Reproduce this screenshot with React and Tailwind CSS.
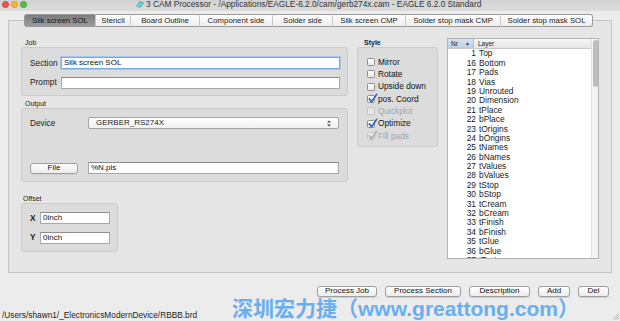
import React from "react";

const tabs = [
  { label: "Silk screen SOL", w: 71 },
  { label: "Stencil", w: 35 },
  { label: "Board Outline", w: 69 },
  { label: "Component side", w: 73 },
  { label: "Solder side", w: 60 },
  { label: "Silk screen CMP", w: 73 },
  { label: "Solder stop mask CMP", w: 95 },
  { label: "Solder stop mask SOL", w: 93 },
];

const layers = [
  [1, "Top"], [16, "Bottom"], [17, "Pads"], [18, "Vias"], [19, "Unrouted"],
  [20, "Dimension"], [21, "tPlace"], [22, "bPlace"], [23, "tOrigins"],
  [24, "bOrigins"], [25, "tNames"], [26, "bNames"], [27, "tValues"],
  [28, "bValues"], [29, "tStop"], [30, "bStop"], [31, "tCream"],
  [32, "bCream"], [33, "tFinish"], [34, "bFinish"], [35, "tGlue"],
  [36, "bGlue"], [37, "tTest"],
];

const styleOpts = [
  { label: "Mirror", checked: false },
  { label: "Rotate", checked: false },
  { label: "Upside down", checked: false },
  { label: "pos. Coord", checked: true },
  { label: "Quickplot", checked: false, disabled: true },
  { label: "Optimize", checked: true },
  { label: "Fill pads", checked: true, disabled: true },
];

const Check = ({ checked, disabled }) => (
  <div
    className={`relative w-[8px] h-[8px] rounded-[1.5px] border ${
      disabled ? "border-[#c4c4c4] bg-[#e6e6e6]" : "border-[#8e8e8e] bg-gradient-to-b from-white to-[#e8e8e8]"
    }`}
  >
    {checked && (
      <svg className="absolute -left-[1px] -top-[3px] w-[11px] h-[11px]" viewBox="0 0 12 12">
        <path
          d="M2.5 6.5 L5 9.5 L10.5 1.5"
          fill="none"
          stroke={disabled ? "#a9a9a9" : "#2d5fb4"}
          strokeWidth="1.8"
          strokeLinecap="round"
          strokeLinejoin="round"
        />
      </svg>
    )}
  </div>
);

const Field = ({ value, className = "", focus }) => (
  <div
    className={`h-[12px] bg-white flex items-center px-[2px] text-[8px] text-[#111] ${
      focus ? "border border-[#7aa7dc] shadow-[0_0_0_1px_#a9c8ee]" : "border border-[#a8a8a8] border-t-[#8c8c8c]"
    } ${className}`}
  >
    {value}
  </div>
);

const Btn = ({ label, w }) => (
  <div
    className="h-[11px] flex items-center justify-center rounded-[3px] border border-[#9e9e9e] bg-gradient-to-b from-white to-[#ececec] text-[8px] text-[#111] shadow-[0_1px_0_#d0d0d0]"
    style={{ width: w }}
  >
    {label}
  </div>
);

export default function App() {
  return (
    <div
      className="relative w-[620px] h-[321px] overflow-hidden bg-[#ececec] text-[#1a1a1a] flex flex-col"
      style={{ fontFamily: '"Liberation Sans", Arial, sans-serif' }}
    >
      {/* Title bar */}
      <div className="h-[11px] bg-gradient-to-b from-[#d2d2d2] to-[#dcdcdc] flex items-center relative">
        <div className="flex gap-[1px] pl-[2px] items-center -mt-[2px]">
          <div className="w-[7px] h-[7px] rounded-full bg-[#f5514d] border border-[#d0403b]" />
          <div className="w-[7px] h-[7px] rounded-full bg-[#f9b431] border border-[#d89a22] ml-[1px]" />
          <div className="w-[7px] h-[7px] rounded-full bg-[#56c243] border border-[#3ea32d] ml-[1px]" />
        </div>
        <div className="flex items-center ml-[109px] -mt-[2px] text-[8.3px] text-[#333] whitespace-nowrap">
          <svg className="w-[8px] h-[7px] mr-[2px]" viewBox="0 0 8 7">
            <path d="M0 5 L4 0 L8 2 L4 7 Z" fill="#3bb3a8" />
            <path d="M1 5 L4 1.5 L6.5 2.5 L3.5 6 Z" fill="#6fd3f0" />
          </svg>
          3 CAM Processor - /Applications/EAGLE-6.2.0/cam/gerb274x.cam - EAGLE 6.2.0 Standard
        </div>
      </div>

      {/* Tabs */}
      <div className="relative z-10 flex mt-[3px] ml-[24px] h-[13px]">
        {tabs.map((t, i) => (
          <div
            key={t.label}
            className={`flex items-center justify-center text-[7.8px] whitespace-nowrap border-y border-[#9a9a9a] ${
              i === 0
                ? "rounded-l-[3px] border-l bg-gradient-to-b from-[#7c7c7c] to-[#9c9c9c] text-[#111]"
                : "bg-gradient-to-b from-white to-[#ededed] text-[#222] border-l border-l-[#c9c9c9]"
            } ${i === tabs.length - 1 ? "rounded-r-[3px] border-r" : ""} ${i === 1 ? "border-l-[#8a8a8a]" : ""}`}
            style={{ width: t.w }}
          >
            {t.label}
          </div>
        ))}
      </div>

      {/* Tab pane */}
      <div className="mx-[8px] -mt-[7px] h-[255px] border border-[#c4c4c4] bg-[#e6e6e6] flex pl-[12px] pt-[18px] gap-[9px]">
        {/* Left column */}
        <div className="w-[327px] flex flex-col">
          <div className="text-[7px] leading-[8px] pl-[4px] h-[8px]">Job</div>
          <div className="h-[49px] rounded-[3px] border border-[#cbcbcb] bg-[#dcdcdc] pt-[9px] pl-[8px] pr-[7px] flex flex-col gap-[7px]">
            <div className="flex items-center">
              <span className="w-[31px] text-[8.3px]">Section</span>
              <Field value="Silk screen SOL" className="flex-1" focus />
            </div>
            <div className="flex items-center">
              <span className="w-[31px] text-[8.3px]">Prompt</span>
              <Field value="" className="flex-1" />
            </div>
          </div>

          <div className="text-[7px] leading-[8px] pl-[4px] h-[8px] mt-[4px]">Output</div>
          <div className="h-[74px] rounded-[3px] border border-[#cbcbcb] bg-[#dcdcdc] pt-[8px] pl-[8px] pr-[8px] flex flex-col">
            <div className="flex items-center">
              <span className="w-[58px] text-[8.3px]">Device</span>
              <div className="flex-1 h-[12px] rounded-[2px] border border-[#a3a3a3] bg-gradient-to-b from-white to-[#f0f0f0] flex items-center justify-between px-[7px] text-[8px]">
                <span>GERBER_RS274X</span>
                <svg className="w-[4px] h-[7px]" viewBox="0 0 4 7">
                  <path d="M0 2.6 L2 0.4 L4 2.6 Z M0 4.4 L2 6.6 L4 4.4 Z" fill="#444" />
                </svg>
              </div>
            </div>
            <div className="flex items-center mt-[33px]">
              <div className="w-[58px]">
                <Btn label="File" w={48} />
              </div>
              <Field value="%N.pls" className="flex-1" />
            </div>
          </div>

          <div className="text-[7px] leading-[8px] pl-[2px] h-[8px] mt-[13px]">Offset</div>
          <div className="w-[97px] h-[49px] rounded-[3px] border border-[#cbcbcb] bg-[#dcdcdc] pt-[8px] pl-[8px] flex flex-col gap-[7px]">
            <div className="flex items-center">
              <span className="w-[10px] text-[8.3px] font-bold">X</span>
              <Field value="0inch" className="w-[70px]" />
            </div>
            <div className="flex items-center">
              <span className="w-[10px] text-[8.3px] font-bold">Y</span>
              <Field value="0inch" className="w-[70px]" />
            </div>
          </div>
        </div>

        {/* Style column */}
        <div className="w-[81px] flex flex-col">
          <div className="text-[7px] leading-[8px] pl-[7px] h-[8px] font-bold">Style</div>
          <div className="h-[100px] rounded-[3px] border border-[#cbcbcb] bg-[#dcdcdc] pt-[8px] pl-[9px] flex flex-col">
            {styleOpts.map((o) => (
              <div key={o.label} className="h-[12.3px] flex items-center gap-[3px]">
                <Check checked={o.checked} disabled={o.disabled} />
                <span className={`text-[8.3px] ${o.disabled ? "text-[#a5a5a5]" : "text-[#111]"}`}>{o.label}</span>
              </div>
            ))}
          </div>
        </div>

        {/* Layer list */}
        <div className="w-[152px] h-[221px] -mt-[1px] border border-[#b3b3b3] bg-white flex overflow-hidden">
          <div className="flex-1 flex flex-col">
            <div className="h-[10px] flex border-b border-[#c8c8c8] text-[6.5px] shrink-0">
              <div className="w-[26px] flex items-center justify-between px-[3px] bg-gradient-to-b from-[#d6e4f5] to-[#b8cfea] border-r border-[#a9bcd6]">
                <span>Nr</span>
                <span className="text-[5px] text-[#444]">▲</span>
              </div>
              <div className="flex-1 flex items-center pl-[4px] bg-gradient-to-b from-[#f7f7f7] to-[#e4e4e4]">Layer</div>
            </div>
            {layers.map(([n, name]) => (
              <div key={n} className="h-[9.4px] shrink-0 flex items-center text-[8.4px] leading-none">
                <span className="w-[28px] text-right">{n}</span>
                <span className="pl-[3px]">{name}</span>
              </div>
            ))}
          </div>
          <div className="w-[7px] bg-[#f4f4f4] border-l border-[#e2e2e2] pt-[1px] flex justify-center">
            <div className="w-[5px] h-[47px] rounded-full bg-[#bdbdbd]" />
          </div>
        </div>
      </div>

      {/* Bottom buttons */}
      <div className="flex justify-end gap-[8px] pr-[11px] mt-[13px]">
        <Btn label="Process Job" w={60} />
        <Btn label="Process Section" w={76} />
        <Btn label="Description" w={61} />
        <Btn label="Add" w={32} />
        <Btn label="Del" w={31} />
      </div>

      {/* Status */}
      <div className="mt-[12px] pl-[2px] text-[8.3px] text-[#222] whitespace-nowrap">
        /Users/shawn1/_ElectronicsModernDevice/RBBB.brd
      </div>

      {/* Watermark overlay */}
      <div
        className="absolute left-[232px] top-[297px] text-[21px] leading-[24px] font-bold text-[#5aa8f2] whitespace-nowrap opacity-90"
        style={{ fontFamily: '"Liberation Sans", "Noto Sans CJK SC", sans-serif' }}
      >
        深圳宏力捷（www.greattong.com）
      </div>

      {/* Resize grip */}
      <svg className="absolute right-[1px] bottom-[1px] w-[7px] h-[7px]" viewBox="0 0 7 7">
        <path d="M6.5 1 L1 6.5 M6.5 3.5 L3.5 6.5 M6.5 5.5 L5.5 6.5" stroke="#9a9a9a" strokeWidth="0.8" />
      </svg>
    </div>
  );
}
